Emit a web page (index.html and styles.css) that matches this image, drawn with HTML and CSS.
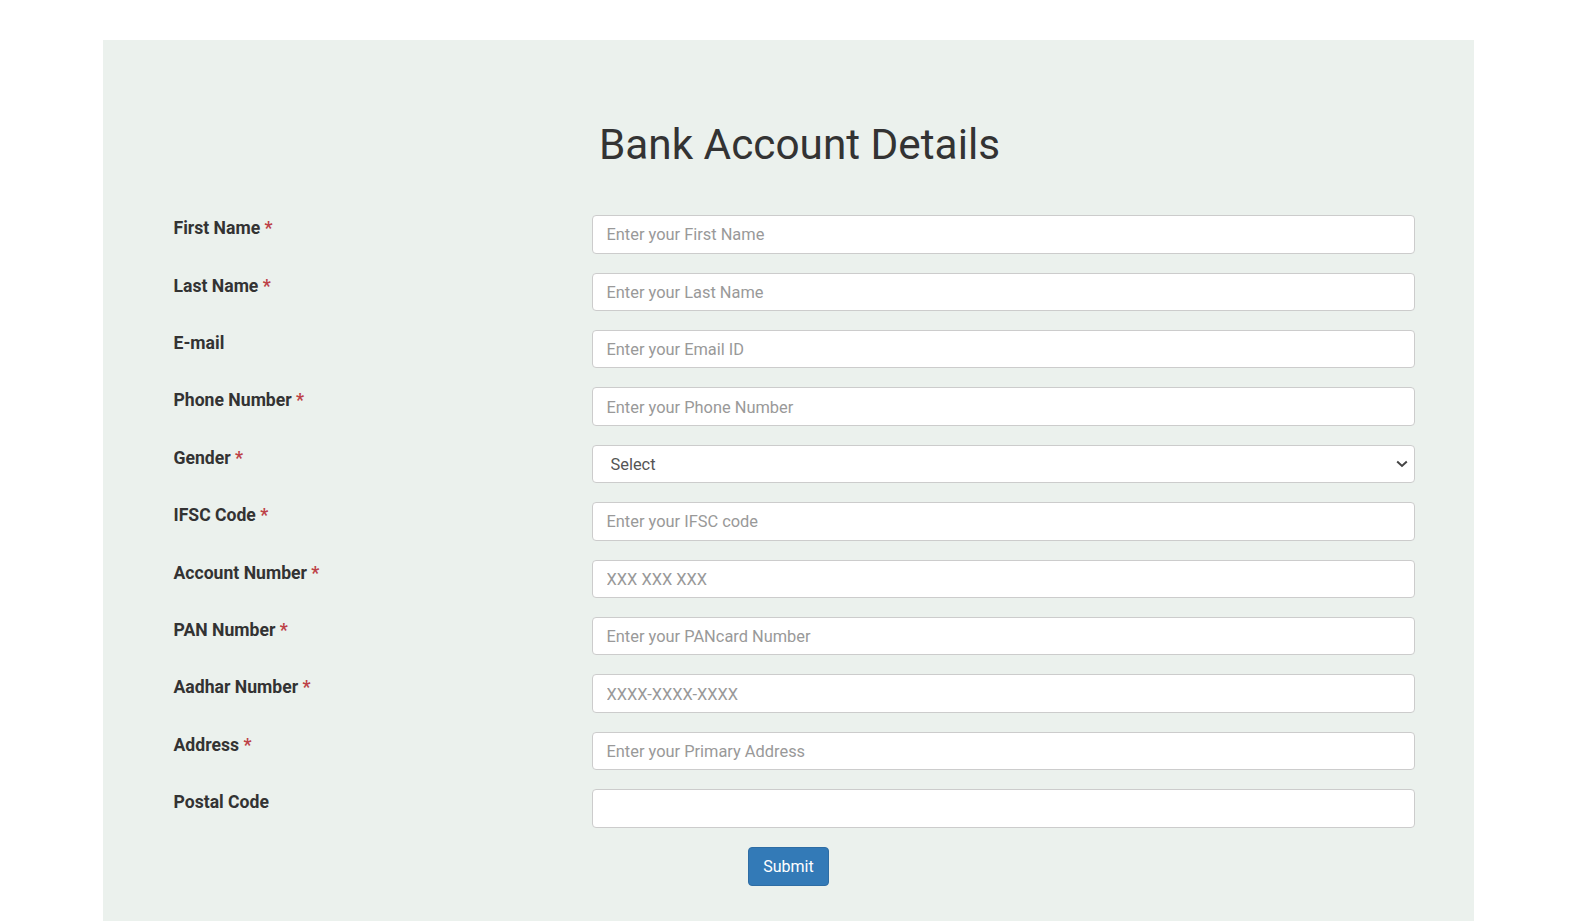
FILE: index.html
```html
<!DOCTYPE html>
<html lang="en">
<head>
<meta charset="utf-8">
<title>Bank Account Details</title>
<link rel="stylesheet" href="styles.css">
</head>
<body>
<div class="panel">
  <h1 class="title">Bank Account Details</h1>
  <form class="form">
    <div class="fields">
      <div class="field"><label class="label">First Name <span class="req">*</span></label><input class="control" type="text" placeholder="Enter your First Name"></div>
      <div class="field"><label class="label">Last Name <span class="req">*</span></label><input class="control" type="text" placeholder="Enter your Last Name"></div>
      <div class="field"><label class="label">E-mail</label><input class="control" type="text" placeholder="Enter your Email ID"></div>
      <div class="field"><label class="label">Phone Number <span class="req">*</span></label><input class="control" type="text" placeholder="Enter your Phone Number"></div>
      <div class="field"><label class="label">Gender <span class="req">*</span></label><select class="control select"><option>Select</option><option>Male</option><option>Female</option></select></div>
      <div class="field"><label class="label">IFSC Code <span class="req">*</span></label><input class="control" type="text" placeholder="Enter your IFSC code"></div>
      <div class="field"><label class="label">Account Number <span class="req">*</span></label><input class="control" type="text" placeholder="XXX XXX XXX"></div>
      <div class="field"><label class="label">PAN Number <span class="req">*</span></label><input class="control" type="text" placeholder="Enter your PANcard Number"></div>
      <div class="field"><label class="label">Aadhar Number <span class="req">*</span></label><input class="control" type="text" placeholder="XXXX-XXXX-XXXX"></div>
      <div class="field"><label class="label">Address <span class="req">*</span></label><input class="control" type="text" placeholder="Enter your Primary Address"></div>
      <div class="field"><label class="label">Postal Code</label><input class="control" type="text"></div>
    </div>
    <div class="actions"><button class="btn" type="button">Submit</button></div>
  </form>
</div>
</body>
</html>
```
FILE: styles.css
```css
html, body {
  margin: 0;
  padding: 0;
  background: #ffffff;
  overflow: hidden;
}
body {
  font-family: Roboto, "Liberation Sans", Arial, sans-serif;
  color: #333333;
}
.panel {
  margin: 40px 0 0 103px;
  width: 1371px;
  height: 900px;
  background: #ebf1ed;
  padding-top: 77.6px;
  box-sizing: border-box;
}
.title {
  margin: 0;
  font-size: 42.3px;
  font-weight: 400;
  line-height: 54px;
  text-align: center;
  color: #333333;
  padding-left: 22px;
}
.form {
  margin-top: 43.7px;
}
.fields {
  display: flex;
  flex-direction: column;
  gap: 19px;
  padding: 0 59.5px 0 70.5px;
}
.field {
  display: grid;
  grid-template-columns: 418px 823px;
  align-items: start;
}
.label {
  font-size: 17.6px;
  font-weight: 700;
  line-height: 24px;
  padding-top: 1px;
  color: #333333;
}
.req {
  color: #bd4147;
}
.control {
  box-sizing: border-box;
  width: 823px;
  height: 38.4px;
  margin: 0;
  padding: 1px 13px 0 14px;
  border: 1px solid #cccccc;
  border-radius: 4px;
  background: #ffffff;
  font-family: Roboto, "Liberation Sans", Arial, sans-serif;
  font-size: 16.4px;
  color: #555555;
  outline: none;
}
.control::placeholder {
  color: #999999;
  opacity: 1;
}
.select {
  appearance: none;
  -webkit-appearance: none;
  padding-left: 18px;
  background-image: url("data:image/svg+xml;utf8,<svg xmlns='http://www.w3.org/2000/svg' width='12' height='8' viewBox='0 0 12 8'><path d='M1.2 1.5 L6 6 L10.8 1.5' fill='none' stroke='%23444444' stroke-width='2'/></svg>");
  background-repeat: no-repeat;
  background-position: right 6px center;
  background-size: 12px 8px;
}
.actions {
  display: flex;
  justify-content: center;
  margin-top: 19px;
}
.btn {
  box-sizing: border-box;
  height: 39px;
  padding: 1px 14px 0;
  border: 1px solid #2e6da4;
  border-radius: 4px;
  background: #337ab7;
  color: #ffffff;
  font-family: Roboto, "Liberation Sans", Arial, sans-serif;
  font-size: 16px;
  line-height: 1;
  cursor: pointer;
}
```
